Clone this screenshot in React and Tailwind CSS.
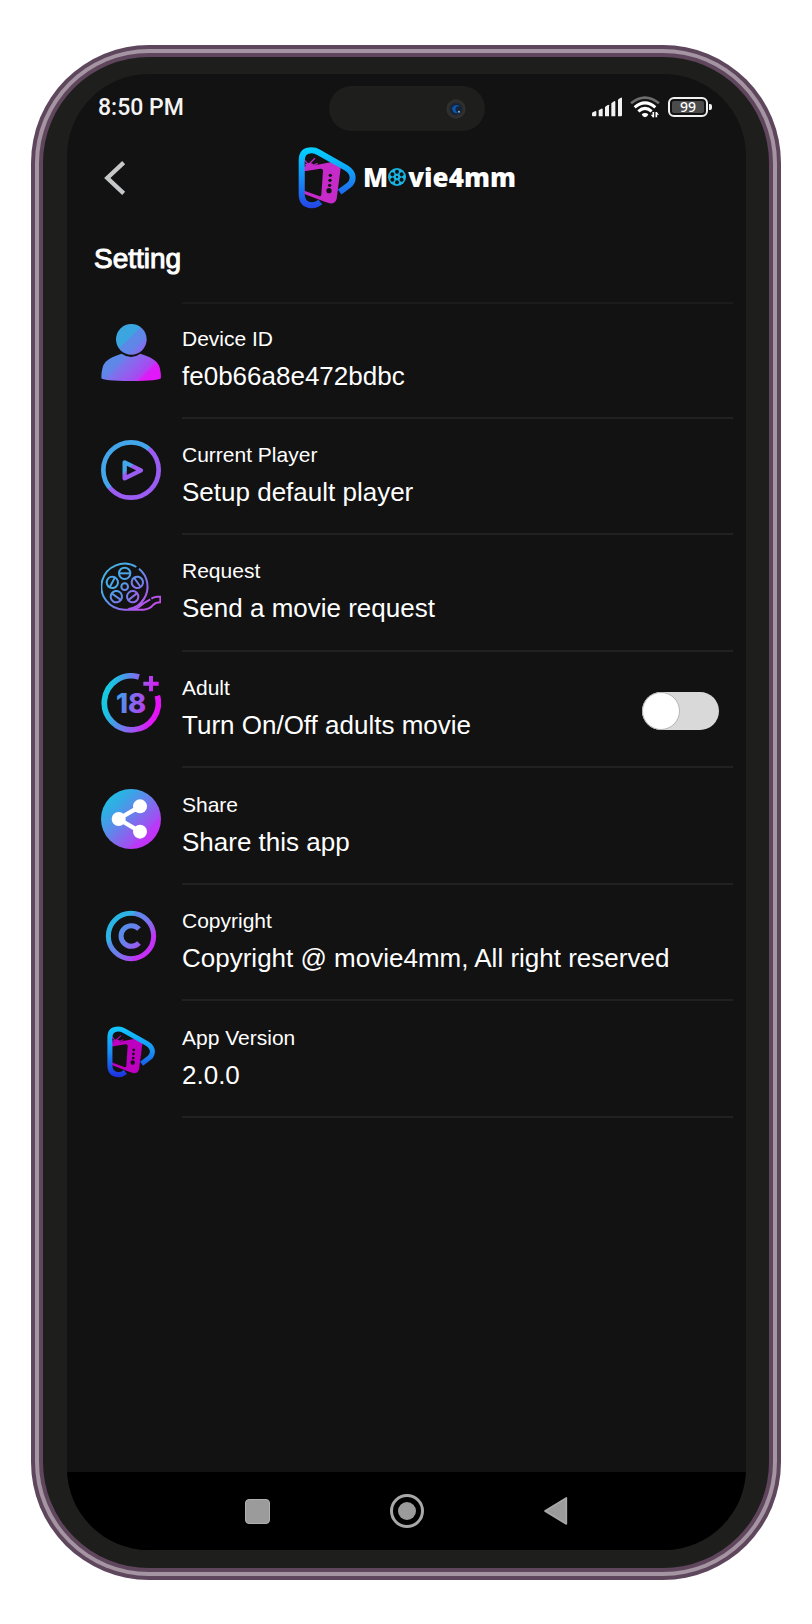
import React, { useState } from "react";

function BrandMark({ id, className, top, bottom, tv }) {
  return (
    <svg viewBox="22 228 180 192" className={className} aria-hidden="true">
      <defs>
        <linearGradient id={id} x1="0" y1="232" x2="0" y2="414" gradientUnits="userSpaceOnUse">
          <stop offset="0.05" stopColor={top} />
          <stop offset="0.5" stopColor="#1690f5" />
          <stop offset="1" stopColor={bottom} />
        </linearGradient>
      </defs>
      <path
        fillRule="evenodd"
        fill={tv}
        d="M42 290 L50 288 L57 289 L66 287 L76 286 L130 275 Q154 274 153 294 L141 386 Q137 402 120 400 L105 395 L42 371 Z M44 304 L92 296 Q100 295 100 302 L95 374 Q94 380 88 378 L44 362 Z"
      />
      <path d="M42 268 L56 283 M58 282 L76 265 M46 283 L60 287 M66 288 L84 280" stroke={tv} strokeWidth="4" fill="none" />
      <ellipse cx="60" cy="287" rx="12" ry="8" fill={tv} />
      <g fill="#121212">
        <circle cx="122" cy="316" r="5" />
        <circle cx="121" cy="331" r="5" />
        <circle cx="120" cy="346" r="5" />
        <circle cx="118" cy="362" r="8" />
      </g>
      <path
        fill="none"
        stroke={"url(#" + id + ")"}
        strokeWidth="18"
        d="M92 396 Q80 406 66 406 Q36 404 36 372 L36 272 Q36 241 66 241 Q77 241 87 247 L170 294 Q189 306 189 323 Q189 337 177 346 L150 366"
      />
    </svg>
  );
}

function Reel() {
  const holes = [0, 60, 120, 180, 240, 300];
  return (
    <svg viewBox="0 0 54 54" className="size-[18px]" aria-hidden="true">
      <circle cx="27" cy="27" r="27" fill="#19b4e4" />
      {holes.map((a) => (
        <circle key={a} cx="27" cy="11" r="6" fill="#121212" transform={"rotate(" + a + " 27 27)"} />
      ))}
      <circle cx="27" cy="27" r="3.5" fill="#121212" />
    </svg>
  );
}

function Gradient({ id, stops, x1 = 20, y1 = 20, x2 = 160, y2 = 160 }) {
  return (
    <defs>
      <linearGradient id={id} x1={x1} y1={y1} x2={x2} y2={y2} gradientUnits="userSpaceOnUse">
        {stops.map(([offset, color], i) => (
          <stop key={i} offset={offset} stopColor={color} />
        ))}
      </linearGradient>
    </defs>
  );
}

function IconBox({ children }) {
  return (
    <svg viewBox="0 0 180 180" className="size-[60px]" aria-hidden="true">
      {children}
    </svg>
  );
}

const UserIcon = () => (
  <IconBox>
    <Gradient
      id="user"
      x1={35}
      y1={25}
      x2={165}
      y2={155}
      stops={[[0.1, "#3ba5e0"], [0.27, "#3ba5e0"], [0.27, "#5b8ae6"], [0.42, "#5f86e8"], [0.5, "#7b74ec"], [0.65, "#9260ef"], [0.8, "#a54bf0"], [0.84, "#b63ff2"], [0.88, "#d91ff7"], [1, "#e416fa"]]}
    />
    <circle cx="91" cy="49" r="46" fill="url(#user)" />
    <path fill="url(#user)" d="M62 92 Q90 112 118 92 Q150 101 166 116 Q180 130 180 165 Q176 174 90 174 Q4 174 1 165 Q1 130 14 116 Q30 101 62 92 Z" />
  </IconBox>
);

const PlayIcon = () => (
  <IconBox>
    <Gradient id="play" x1={0} y1={0} x2={180} y2={180} stops={[[0.47, "#43a6ea"], [0.47, "#9a5cf3"]]} />
    <circle cx="90" cy="90" r="83" fill="none" stroke="url(#play)" strokeWidth="14" />
    <path d="M71 67 L120 91 L71 115 Z" fill="none" stroke="url(#play)" strokeWidth="13" strokeLinejoin="round" />
  </IconBox>
);

const FilmIcon = () => {
  const holes = [[71, 52, 0], [34, 79, -62], [109, 79, 55], [46, 122, 35], [95, 122, -38]];
  return (
    <IconBox>
      <Gradient id="film" stops={[[0, "#46b5e6"], [0.35, "#4ba3e8"], [0.6, "#8074ec"], [0.8, "#b057ee"], [1, "#c84bf0"]]} />
      <g fill="none" stroke="url(#film)" strokeWidth="6">
        <path d="M106 33 A69 69 0 1 0 71 161 L128 161 Q148 159 156 147 Q164 139 178 139 L178 122 L168 122 Q158 123 151 128" />
        <path d="M114 38 A69 69 0 0 1 128 130 Q112 156 82 159" />
        <path d="M148 130 Q130 139 114 153 Q108 158 98 160 M128 130 Q122 141 112 148" />
        <circle cx="71" cy="92" r="10" />
        {holes.map(([x, y, a]) => (
          <g key={x} transform={"rotate(" + a + " " + x + " " + y + ")"}>
            <circle cx={x} cy={y} r="17" />
            <path d={"M" + (x - 16) + " " + y + " L" + (x + 16) + " " + y} />
          </g>
        ))}
      </g>
    </IconBox>
  );
};

const AdultIcon = () => (
  <IconBox>
    <Gradient id="adult" x1={0} y1={70} x2={180} y2={110} stops={[[0, "#12cfe0"], [0.14, "#1cc3e3"], [0.32, "#4b95e9"], [0.5, "#7e6fee"], [0.66, "#a350f0"], [0.82, "#d322f5"], [1, "#f00afa"]]} />
    <path d="M114 12 A81 81 0 1 0 169 68" fill="none" stroke="url(#adult)" strokeWidth="17" />
    <path d="M150 9 V55 M127 32 H173" fill="none" stroke="url(#adult)" strokeWidth="12" />
    <text x="90" y="121" textAnchor="middle" fontFamily="Inter, sans-serif" fontWeight="800" fontSize="82" fill="url(#adult)">
      18
    </text>
  </IconBox>
);

const ShareIcon = () => (
  <IconBox>
    <Gradient id="share" stops={[[0, "#1fbfe2"], [0.2, "#35a9e5"], [0.4, "#5b8bea"], [0.6, "#8468ed"], [0.76, "#a14ff2"], [0.82, "#b93af6"], [1, "#c92cf8"]]} />
    <circle cx="90" cy="90" r="90" fill="url(#share)" />
    <path d="M117 52 L53 90 L117 128" fill="none" stroke="#fff" strokeWidth="13" />
    <circle cx="53" cy="90" r="21" fill="#fff" />
    <circle cx="117" cy="52" r="21" fill="#fff" />
    <circle cx="117" cy="128" r="21" fill="#fff" />
  </IconBox>
);

const CopyrightIcon = () => (
  <IconBox>
    <Gradient id="copy" x1={30} y1={40} x2={150} y2={140} stops={[[0, "#25b8e4"], [0.25, "#33aee6"], [0.28, "#568dea"], [0.5, "#6c7eec"], [0.68, "#9260ef"], [0.78, "#a74cf1"], [0.82, "#bf35f6"], [1, "#c92cf8"]]} />
    <circle cx="90" cy="90" r="68" fill="none" stroke="url(#copy)" strokeWidth="15" />
    <path d="M114 69 A31 31 0 1 0 114 111" fill="none" stroke="url(#copy)" strokeWidth="15" />
  </IconBox>
);

const VersionIcon = () => (
  <span className="flex size-[60px] items-center justify-center">
    <BrandMark id="mark-small" className="h-[54px] w-[50px]" top="#12c4ff" bottom="#1f2fe0" tv="#bd00c0" />
  </span>
);

const rows = [
  { title: "Device ID", text: "fe0b66a8e472bdbc", Icon: UserIcon },
  { title: "Current Player", text: "Setup default player", Icon: PlayIcon },
  { title: "Request", text: "Send a movie request", Icon: FilmIcon },
  { title: "Adult", text: "Turn On/Off adults movie", Icon: AdultIcon, toggle: true },
  { title: "Share", text: "Share this app", Icon: ShareIcon },
  { title: "Copyright", text: "Copyright @ movie4mm, All right reserved", Icon: CopyrightIcon },
  { title: "App Version", text: "2.0.0", Icon: VersionIcon },
];

function StatusIcons() {
  return (
    <div className="flex items-center justify-end gap-2 pr-[34px] pb-1">
      <svg viewBox="0 0 90 60" className="h-5 w-[30px]" fill="#f1f1f1" aria-hidden="true">
        <path d="M0 50 Q0 46 4 45 L11 42 Q13 42 13 44 V55 Q13 58 10 58 H3 Q0 58 0 55 Z" />
        <path d="M20 40 L28 35 Q31 34 32 36 V58 H22 Q20 58 20 56 Z" />
        <path d="M39 30 L47 24 Q50 22 51 25 V58 H41 Q39 58 39 56 Z" />
        <path d="M58 19 L66 13 Q69 11 70 14 V56 Q70 58 68 58 H58 Z" />
        <path d="M78 10 Q78 7 81 5 L87 2 Q90 1 90 4 V55 Q90 58 87 58 H78 Z" />
      </svg>
      <svg viewBox="0 0 90 66" className="h-[22px] w-[30px]" fill="none" aria-hidden="true">
        <path d="M3 22 Q45 -12 87 22" stroke="#6d6d6d" strokeWidth="8" />
        <path d="M14 34 Q45 7 76 34" stroke="#fff" strokeWidth="9" />
        <path d="M25 46 Q45 28 65 46" stroke="#fff" strokeWidth="9" />
        <path d="M35 55 Q45 47 55 55 Q53 62 45 64 Q37 62 35 55 Z" fill="#fff" />
        <path d="M70 48 V64 M79 48 V64" stroke="#fff" strokeWidth="5" />
        <path d="M62 56 H70 V65 Z M87 56 H79 V47 Z" fill="#fff" />
      </svg>
      <div className="flex items-center gap-px">
        <span className="flex h-5 w-10 rounded-md border-2 border-[#f1f1f1] p-0.5">
          <span className="flex flex-1 items-center justify-center rounded-xs bg-[#4b4b4b] font-['Noto_Sans',sans-serif] text-[14px] leading-3 font-medium text-white">
            99
          </span>
        </span>
        <span className="h-1.5 w-[3px] rounded-r-xs bg-[#f1f1f1]" />
      </div>
    </div>
  );
}

export default function App() {
  const [adult, setAdult] = useState(false);
  return (
    <div className="flex min-h-screen flex-col bg-white px-[31px] pt-[45px] pb-11 font-['Liberation_Sans',Arial,sans-serif] text-white">
      <div className="flex flex-1 flex-col rounded-[118px] bg-[#5e475c] p-1">
        <div className="flex flex-1 flex-col rounded-[114px] bg-[#a594a2] p-1">
          <div className="flex flex-1 flex-col rounded-[110px] bg-[#5f465d] p-1">
            <div className="flex flex-1 flex-col rounded-[106px] bg-[#1e1e1c] pt-[17px] pr-[23px] pb-[18px] pl-6">
              <div className="flex flex-1 flex-col overflow-hidden rounded-[82px] bg-[#121212]">
                <div className="grid grid-cols-[1fr_auto_1fr] items-center pt-3">
                  <time className="pb-0.5 pl-[31px] font-[Roboto,sans-serif] text-[23px] leading-7 font-medium text-[#f4f4f4]">8:50 PM</time>
                  <div className="flex h-[45px] w-[156px] items-center justify-end rounded-full bg-[#1e1e1c] pr-[19px]">
                    <svg viewBox="0 0 60 60" className="size-5" aria-hidden="true">
                      <circle cx="30" cy="30" r="29" fill="#303030" />
                      <circle cx="30" cy="30" r="22" fill="#292a2b" />
                      <circle cx="30" cy="30" r="17" fill="#13243a" />
                      <path d="M18 27 Q27 12 42 22 L36 22 Q25 24 30 36 L36 43 Q19 44 18 27 Z" fill="#0d55ad" />
                      <circle cx="39" cy="38" r="3" fill="#8fb6d9" />
                    </svg>
                  </div>
                  <StatusIcons />
                </div>

                <header className="grid grid-cols-[1fr_auto_1fr] items-center pt-[15px]">
                  <button type="button" aria-label="Back" className="ml-[37px] flex size-10 items-center">
                    <svg viewBox="0 0 66 102" className="h-[34px] w-[22px]" fill="none" aria-hidden="true">
                      <path d="M59 5 L10 51 L59 97" stroke="#c6c7c8" strokeWidth="13" />
                    </svg>
                  </button>
                  <a href="#home" aria-label="Movie4mm" className="flex items-center gap-1.5">
                    <BrandMark id="mark-large" className="h-16 w-[60px]" top="#05cdff" bottom="#2445e6" tv="#c62bca" />
                    <span className="flex items-center pb-0.5 font-['Open_Sans',sans-serif] text-[26px] leading-8 font-extrabold">
                      M<Reel />
                      <span className="pl-0.5">vie4mm</span>
                    </span>
                  </a>
                </header>

                <main className="flex flex-1 flex-col pt-[31px]">
                  <h1 className="pl-[27px] text-[28px] leading-9 [-webkit-text-stroke:1px_#fff]">Setting</h1>
                  <ul className="mt-[25px] grid min-h-[816px] auto-rows-fr pr-[13px] pl-[34px]">
                    {rows.map(({ title, text, Icon, toggle }, i) => (
                      <li key={title} className="flex gap-[21px]">
                        <div className="shrink-0 pt-[21px]">
                          <Icon />
                        </div>
                        <div
                          className={
                            i === 0
                              ? "flex flex-1 items-center justify-between border-y-2 border-[#212121] border-t-[#1b1b1b]"
                              : "flex flex-1 items-center justify-between border-b-2 border-[#212121]"
                          }
                        >
                          <div>
                            <h2 className="text-[21px] leading-8" id={"row-" + i}>
                              {title}
                            </h2>
                            <p className="text-[26px] leading-[42px] whitespace-nowrap">{text}</p>
                          </div>
                          {toggle && (
                            <input
                              type="checkbox"
                              role="switch"
                              aria-labelledby={"row-" + i}
                              checked={adult}
                              onChange={(e) => setAdult(e.target.checked)}
                              className="mt-1 mr-3.5 flex h-[38px] w-[77px] cursor-pointer appearance-none justify-start rounded-full bg-[#d9d9d9] before:size-[38px] before:rounded-full before:border before:border-[#b5b5b5] before:bg-white before:content-[''] checked:justify-end checked:bg-[#9a5cf3]"
                            />
                          )}
                        </div>
                      </li>
                    ))}
                  </ul>
                </main>

                <nav className="flex h-[78px] items-center justify-center bg-black">
                  <button type="button" aria-label="Recent apps" className="flex h-12 w-[149px] items-center justify-center">
                    <span className="size-[25px] rounded-sm border border-[#b0b0b0] bg-[#9b9b9b]" />
                  </button>
                  <button type="button" aria-label="Home" className="flex h-12 w-[149px] items-center justify-center">
                    <span className="flex size-[34px] items-center justify-center rounded-full border-3 border-[#a8a8a8]">
                      <span className="size-[18px] rounded-full bg-[#9b9b9b]" />
                    </span>
                  </button>
                  <button type="button" aria-label="Back" className="flex h-12 w-[149px] items-center justify-center">
                    <svg viewBox="0 0 72 84" className="h-7 w-6" aria-hidden="true">
                      <path d="M3 42 L67 3 V81 Z" fill="#9b9b9b" stroke="#a8a8a8" strokeWidth="5" strokeLinejoin="round" />
                    </svg>
                  </button>
                </nav>
              </div>
            </div>
          </div>
        </div>
      </div>
    </div>
  );
}
